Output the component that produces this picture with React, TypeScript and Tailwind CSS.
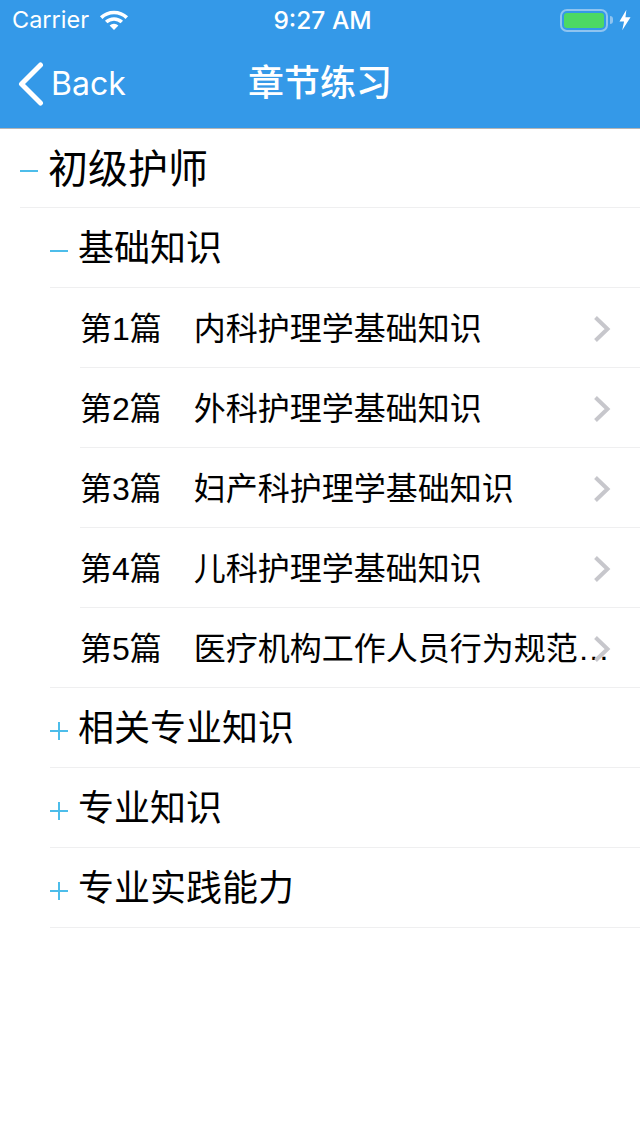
const UI = "font-['Inter','Liberation_Sans','Noto_Sans_CJK_SC',sans-serif]";
const LIST = "font-['Liberation_Sans','Noto_Sans_CJK_SC',sans-serif]";

function Wifi() {
  return (
    <svg width="30" height="22" viewBox="0 0 30 22" className="text-white">
      <path d="M2.2 8.6 A18.5 18.5 0 0 1 27.8 8.6" fill="none" stroke="currentColor" strokeWidth="3.6" />
      <path d="M7.2 13 A11.5 11.5 0 0 1 22.8 13" fill="none" stroke="currentColor" strokeWidth="3.6" />
      <path d="M10.6 16.6 A6.4 6.4 0 0 1 19.4 16.6 L15 21 Z" fill="currentColor" />
    </svg>
  );
}

function Battery() {
  return (
    <div className="flex items-center gap-[2px]">
      <div className="flex h-[23px] w-[48px] items-center justify-center rounded-[7px] border-2 border-[#8fc4f0]">
        <div className="h-[15px] w-[40px] rounded-[3px] bg-[#4cd964]" />
      </div>
      <div className="h-[8px] w-[3px] rounded-r-[3px] bg-[#8fc4f0]" />
    </div>
  );
}

function Bolt() {
  return (
    <svg width="12" height="22" viewBox="0 0 13 22" className="ml-[6px]">
      <path d="M8 0 L0.5 12.5 H5.5 L3.5 22 L12.5 8 H7 Z" fill="white" />
    </svg>
  );
}

function Chevron() {
  return (
    <svg width="18" height="28" viewBox="0 0 18 28" className="absolute right-[29px] top-[27px]">
      <path d="M2.5 2.5 L14.5 14 L2.5 25.5" fill="none" stroke="#c7c7cc" strokeWidth="4" />
    </svg>
  );
}

function Sign({ open }: { open: boolean }) {
  return (
    <svg width="18" height="18" viewBox="0 0 18 18" className="mt-[4px] shrink-0">
      <rect x="0" y="8" width="18" height="2" fill="#4dbdea" />
      {!open && <rect x="8" y="0" width="2" height="18" fill="#4dbdea" />}
    </svg>
  );
}

function Group({ label, open, size }: { label: string; open: boolean; size: "lg" | "md" }) {
  return (
    <div className={`flex items-center gap-[10px] border-b border-[#efeff0] ${size === "lg" ? "ml-[20px] h-[79px] pt-px text-[40px]" : "ml-[50px] h-[80px] pt-[2px] text-[36px]"}`}>
      <Sign open={open} />
      <span className="leading-none text-black">{label}</span>
    </div>
  );
}

function Item({ label, last }: { label: string; last?: boolean }) {
  return (
    <div className={`relative flex h-[80px] items-center border-b border-[#efeff0] pt-[2px] ${last ? "ml-[50px] pl-[30px]" : "ml-[80px] pl-0"}`}>
      <span className="block w-[532px] truncate text-[32px] leading-[40px] text-black">{label}</span>
      <Chevron />
    </div>
  );
}

export default function App() {
  return (
    <div className={`flex min-h-[1136px] w-[640px] flex-col bg-white ${LIST}`}>
      <header className={`h-[129px] border-b border-[#b5b5b5] bg-[#3499e8] text-white ${UI}`}>
        <div className="relative flex h-[40px] items-center justify-between pl-[12px] pr-[9px]">
          <div className="flex items-center gap-[10px]">
            <span className="text-[23.5px] leading-none">Carrier</span>
            <Wifi />
          </div>
          <span className="absolute left-[5px] right-0 text-center text-[24.5px] font-medium leading-none">9:27 AM</span>
          <div className="flex items-center">
            <Battery />
            <Bolt />
          </div>
        </div>
        <div className="relative flex h-[88px] items-center pl-[18px]">
          <svg width="26" height="44" viewBox="0 0 26 44" className="shrink-0">
            <path d="M22.5 3 L3.5 22 L22.5 41" fill="none" stroke="white" strokeWidth="5" strokeLinecap="round" strokeLinejoin="round" />
          </svg>
          <span className="ml-[7px] text-[32px] leading-none">Back</span>
          <span className={`absolute left-0 right-0 text-center text-[36px] font-medium leading-none ${LIST}`}>章节练习</span>
        </div>
      </header>
      <Group label="初级护师" open size="lg" />
      <Group label="基础知识" open size="md" />
      <Item label="第1篇　内科护理学基础知识" />
      <Item label="第2篇　外科护理学基础知识" />
      <Item label="第3篇　妇产科护理学基础知识" />
      <Item label="第4篇　儿科护理学基础知识" />
      <Item label="第5篇　医疗机构工作人员行为规范与职业道德基础知识" last />
      <Group label="相关专业知识" open={false} size="md" />
      <Group label="专业知识" open={false} size="md" />
      <Group label="专业实践能力" open={false} size="md" />
    </div>
  );
}
